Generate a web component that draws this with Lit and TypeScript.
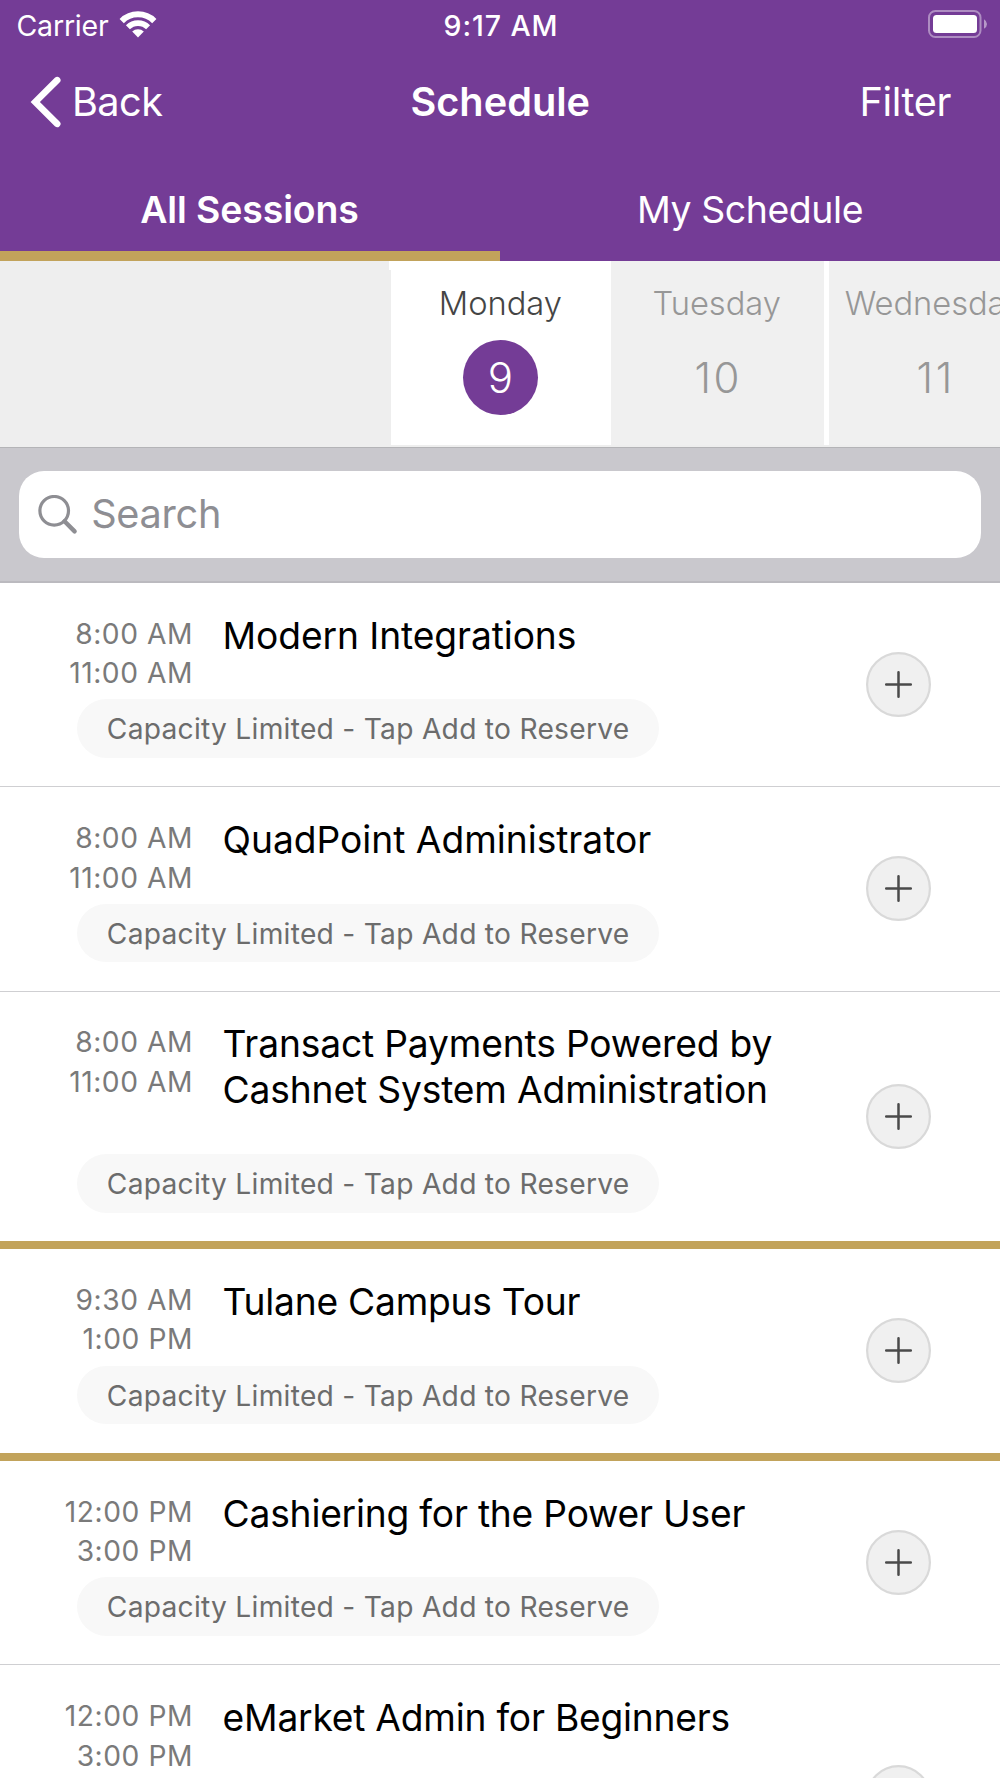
import { LitElement, html, css, nothing } from "lit";
import { customElement, property, state } from "lit/decorators.js";
import { classMap } from "lit/directives/class-map.js";
import { styleMap } from "lit/directives/style-map.js";

interface Session {
  start: string;
  end: string;
  title: string;
  /** Title tracking, in px. */
  tracking: number;
  limited: boolean;
  /** Thick rule that closes a block of sessions starting at the same time. */
  closesBlock: boolean;
}

const SESSIONS: Session[] = [
  { start: "8:00 AM", end: "11:00 AM", title: "Modern Integrations", tracking: -0.1, limited: true, closesBlock: false },
  { start: "8:00 AM", end: "11:00 AM", title: "QuadPoint Administrator", tracking: -0.03, limited: true, closesBlock: false },
  { start: "8:00 AM", end: "11:00 AM", title: "Transact Payments Powered by Cashnet System Administration", tracking: -0.16, limited: true, closesBlock: true },
  { start: "9:30 AM", end: "1:00 PM", title: "Tulane Campus Tour", tracking: -0.25, limited: true, closesBlock: true },
  { start: "12:00 PM", end: "3:00 PM", title: "Cashiering for the Power User", tracking: -0.22, limited: true, closesBlock: false },
  { start: "12:00 PM", end: "3:00 PM", title: "eMarket Admin for Beginners", tracking: -0.23, limited: false, closesBlock: false },
];

const DAYS = [
  { name: "Monday", date: 9 },
  { name: "Tuesday", date: 10 },
  { name: "Wednesday", date: 11 },
];

@customElement("session-row")
class SessionRow extends LitElement {
  @property({ attribute: false }) session!: Session;

  static styles = css`
    :host {
      display: block;
    }
    .row {
      display: flex;
      align-items: center;
      justify-content: space-between;
      padding-right: 69.2px;
      border-bottom: 1px solid #cfcfd2;
      background: #fff;
    }
    .row.block-end {
      border-bottom: 8px solid #c2a35b;
    }
    .row.block-end .main {
      padding-bottom: 28.6px;
    }
    .row.tall {
      min-height: 264.6px;
    }
    .row.tall .main {
      align-self: flex-start;
    }
    .main {
      padding: 29.8px 0 28.1px;
    }
    .head {
      display: grid;
      grid-template-columns: 193px 590px;
      column-gap: 29.6px;
    }
    .times {
      padding-top: 1.9px;
      height: 79.4px;
      text-align: right;
      font-size: 28.2px;
      line-height: 39.7px;
      letter-spacing: 0.55px;
      color: #7a7a7a;
      white-space: nowrap;
    }
    .title {
      margin-bottom: 40.9px;
      font-size: 37.2px;
      line-height: 45.8px;
      color: #000;
    }
    .chip {
      box-sizing: border-box;
      width: 582px;
      height: 58.7px;
      margin-left: 77.4px;
      padding-left: 29.4px;
      border-radius: 30px;
      background: #f8f8f8;
      font-size: 28.2px;
      line-height: 60px;
      letter-spacing: 0.26px;
      color: #6c6c6c;
      white-space: nowrap;
    }
    .add {
      flex: none;
      display: block;
      width: 65px;
      height: 65px;
    }
  `;

  render() {
    const s = this.session;
    return html`
      <div class=${classMap({ row: true, "block-end": s.closesBlock, tall: !s.limited })}>
        <div class="main">
          <div class="head">
            <div class="times">
              <div>${s.start}</div>
              <div>${s.end}</div>
            </div>
            <div class="title" style=${styleMap({ letterSpacing: `${s.tracking}px` })}>${s.title}</div>
          </div>
          ${s.limited ? html`<div class="chip">Capacity Limited - Tap Add to Reserve</div>` : nothing}
        </div>
        <svg class="add" viewBox="0 0 65 65">
          <circle cx="32.5" cy="32.5" r="31.4" fill="#f0f0f0" stroke="#d9d9d9" stroke-width="2.2" />
          <path d="M20.2 32.5H44.8M32.5 20.2V44.8" stroke="#4a4a4a" stroke-width="2.5" stroke-linecap="round" />
        </svg>
      </div>
    `;
  }
}

@customElement("app-root")
class AppRoot extends LitElement {
  @state() private selected = 9;

  static styles = css`
    :host {
      display: block;
      width: 1000px;
      height: 1778px;
      overflow: hidden;
      background: #fff;
      font-family: Inter, "Liberation Sans", sans-serif;
    }
    .top {
      background: #743c96;
      color: #fff;
    }
    .status,
    .nav {
      display: grid;
      grid-template-columns: 1fr auto 1fr;
      align-items: center;
      white-space: nowrap;
    }
    .status {
      height: 51px;
      padding: 0 13px 0 16.5px;
      font-size: 28.5px;
      line-height: 51px;
    }
    .carrier {
      display: flex;
      letter-spacing: -0.2px;
    }
    .wifi {
      display: block;
      width: 38px;
      height: 28px;
      margin: 9.5px 0 0 10.8px;
    }
    .clock {
      font-weight: 500;
      letter-spacing: 0.9px;
      margin-left: -1.5px;
    }
    .battery {
      display: block;
      justify-self: end;
      width: 60px;
      height: 28px;
      margin-top: -2.6px;
    }
    .nav {
      height: 101px;
      padding: 0 49px 0 30px;
      font-size: 39.7px;
      line-height: 50px;
    }
    .back {
      display: flex;
      align-items: center;
      gap: 9px;
      letter-spacing: -0.6px;
    }
    .chevron {
      display: block;
      width: 33px;
      height: 52px;
    }
    .heading {
      font-weight: 600;
      margin-left: 19.5px;
    }
    .filter {
      justify-self: end;
      letter-spacing: -0.39px;
    }
    .tabs {
      display: grid;
      grid-template-columns: 1fr 1fr;
      height: 109px;
    }
    .tab {
      box-sizing: border-box;
      padding-top: 17px;
      border-bottom: 10px solid transparent;
      text-align: center;
      font-size: 37.4px;
      line-height: 82px;
      letter-spacing: -0.4px;
    }
    .tab.active {
      padding-right: 1px;
      border-bottom-color: #c2a35b;
      font-weight: 600;
      letter-spacing: -0.1px;
    }
    .days {
      display: flex;
      box-sizing: border-box;
      height: 186px;
      padding: 0 0 2.5px 391px;
      overflow: hidden;
      background: #eeeeee;
    }
    .day {
      position: relative;
      flex: none;
      display: flex;
      flex-direction: column;
      align-items: center;
      gap: 15.7px;
      box-sizing: border-box;
      width: 212.6px;
      padding: 22px 1.4px 0 0;
      background: #f0f0f0;
      color: #979797;
      font-weight: 300;
    }
    .day + .day + .day {
      border-left: 5px solid #fff;
      width: 217px;
    }
    .day.selected {
      width: 220px;
      background: #fff;
      color: #454545;
    }
    .day.selected::before {
      content: "";
      position: absolute;
      left: -2px;
      top: 0;
      width: 2px;
      height: 9px;
      background: #fff;
    }
    .name {
      font-size: 32.7px;
      line-height: 41px;
      letter-spacing: -0.05px;
    }
    .date {
      width: 75px;
      height: 75px;
      border-radius: 50%;
      text-align: center;
      font-size: 42px;
      line-height: 75px;
    }
    .day:not(.selected) .date {
      letter-spacing: 2.5px;
      text-indent: 3.5px;
    }
    .selected .date {
      background: #743c96;
      color: #fff;
    }
    .search {
      box-sizing: border-box;
      height: 136px;
      padding: 23px 19.5px 0 19px;
      border-top: 1px solid #b4b4b7;
      border-bottom: 2px solid #bbbabf;
      background: #c9c8cd;
    }
    .field {
      display: flex;
      align-items: center;
      gap: 13.5px;
      box-sizing: border-box;
      height: 87px;
      padding-left: 18.7px;
      border-radius: 25px;
      background: #fff;
      color: #8e8e93;
      font-size: 39.7px;
      line-height: 50px;
      letter-spacing: -0.3px;
    }
    .field span {
      padding-bottom: 2px;
    }
    .glass {
      display: block;
      width: 40px;
      height: 40px;
    }
  `;

  render() {
    return html`
      <div class="top">
        <div class="status">
          <div class="carrier">
            <span>Carrier</span>
            <svg class="wifi" viewBox="0 0 38 28" fill="none" stroke="#fff">
              <path d="M2.7 11.1A23.1 23.1 0 0 1 35.3 11.1" stroke-width="6" />
              <path d="M8.9 17.3A14.3 14.3 0 0 1 29.1 17.3" stroke-width="5.6" />
              <path d="M13.2 21.6A8.2 8.2 0 0 1 24.8 21.6L19 27.6Z" fill="#fff" stroke="none" />
            </svg>
          </div>
          <div class="clock">9:17 AM</div>
          <svg class="battery" viewBox="0 0 60 28">
            <rect x="2" y="1" width="51.5" height="26" rx="6.5" fill="none" stroke="#fff" stroke-opacity="0.42" stroke-width="2" />
            <rect x="6" y="5" width="44" height="18" rx="3.5" fill="#fff" />
            <path d="M57 9.2Q60 11 60 14T57 18.8Z" fill="#fff" fill-opacity="0.48" />
          </svg>
        </div>
        <div class="nav">
          <div class="back">
            <svg class="chevron" viewBox="0 0 33 52">
              <path d="M27.2 4.2L5.3 26L27.2 47.8" fill="none" stroke="#fff" stroke-width="6.6" stroke-linecap="round" />
            </svg>
            <span>Back</span>
          </div>
          <div class="heading">Schedule</div>
          <div class="filter">Filter</div>
        </div>
        <div class="tabs">
          <div class="tab active">All Sessions</div>
          <div class="tab">My Schedule</div>
        </div>
      </div>
      <div class="days">
        ${DAYS.map(
          (d) => html`
            <div class=${classMap({ day: true, selected: d.date === this.selected })} @click=${() => (this.selected = d.date)}>
              <div class="name">${d.name}</div>
              <div class="date">${d.date}</div>
            </div>
          `
        )}
      </div>
      <div class="search">
        <div class="field">
          <svg class="glass" viewBox="0 0 40 40" fill="none" stroke="#8e8e93">
            <circle cx="16.2" cy="15.8" r="14.3" stroke-width="3.2" />
            <path d="M26.5 26.3L36.6 36.4" stroke-width="4.4" stroke-linecap="round" />
          </svg>
          <span>Search</span>
        </div>
      </div>
      ${SESSIONS.map((s) => html`<session-row .session=${s}></session-row>`)}
    `;
  }
}
